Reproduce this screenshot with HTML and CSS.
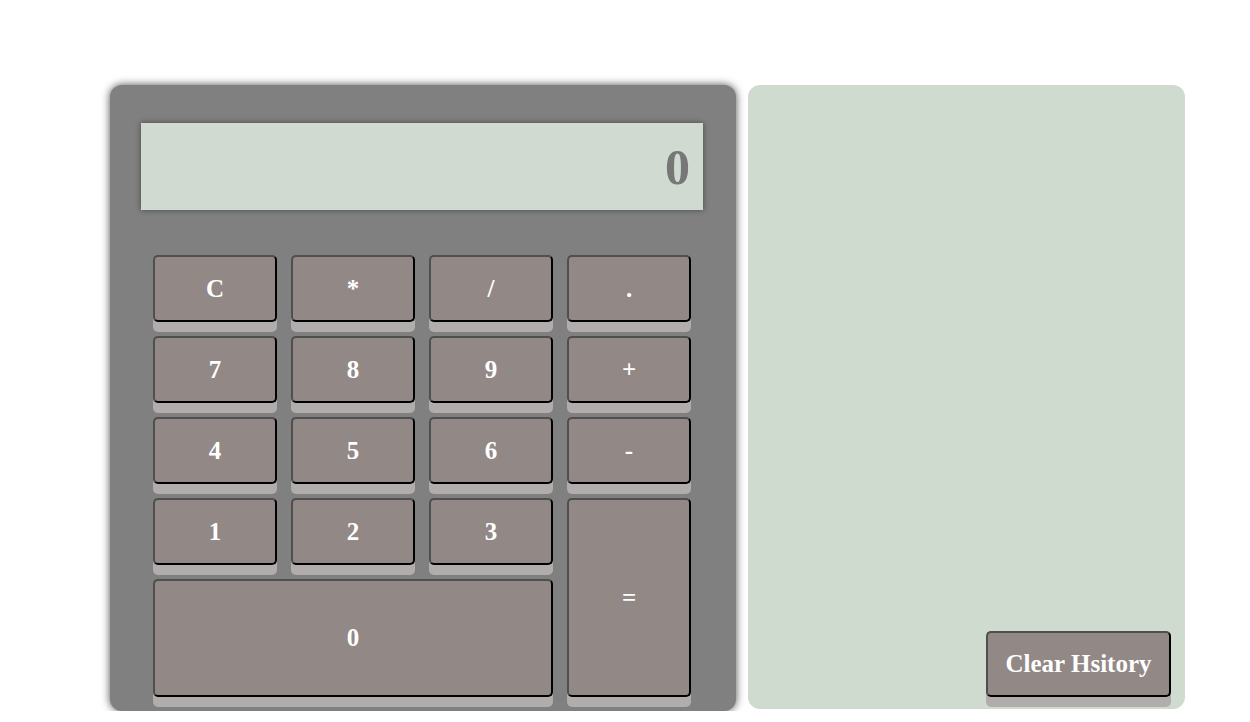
FILE: index.html
```html
<!DOCTYPE html>
<html>
<head>
<meta charset="utf-8">
<link rel="stylesheet" href="styles.css">
</head>
<body>
<div class="page">
  <div class="calculator">
    <div class="display">0</div>
    <div class="keys">
      <button class="key">C</button>
      <button class="key">*</button>
      <button class="key">/</button>
      <button class="key">.</button>
      <button class="key">7</button>
      <button class="key">8</button>
      <button class="key">9</button>
      <button class="key">+</button>
      <button class="key">4</button>
      <button class="key">5</button>
      <button class="key">6</button>
      <button class="key">-</button>
      <button class="key">1</button>
      <button class="key">2</button>
      <button class="key">3</button>
      <button class="key key-equals">=</button>
      <button class="key key-zero">0</button>
    </div>
  </div>
  <div class="history">
    <button class="key clear-btn">Clear Hsitory</button>
  </div>
</div>
</body>
</html>
```
FILE: styles.css
```css
html, body {
  margin: 0;
  padding: 0;
  background: #ffffff;
  font-family: "Liberation Serif", "Times New Roman", serif;
}

.page {
  display: flex;
  align-items: flex-start;
  gap: 12px;
  padding: 85px 0 0 110px;
}

.calculator {
  box-sizing: border-box;
  width: 626px;
  height: 626px;
  background: #808080;
  border-radius: 12px;
  box-shadow: 0 0 8px rgba(0, 0, 0, 0.7);
  padding: 38px 33px 0 31px;
}

.display {
  box-sizing: border-box;
  width: 562px;
  height: 87px;
  background: #d0dad0;
  box-shadow: 0 0 6px rgba(0, 0, 0, 0.45);
  color: #777777;
  font-weight: bold;
  font-size: 50px;
  text-align: right;
  padding: 18px 13px 0 0;
  line-height: 52px;
}

.keys {
  display: grid;
  grid-template-columns: repeat(4, 124px);
  grid-template-rows: repeat(4, 67px) 118px;
  column-gap: 14px;
  row-gap: 14px;
  margin: 45px 0 0 12px;
}

.key {
  box-sizing: border-box;
  margin: 0;
  padding: 0;
  background: #928886;
  color: #ffffff;
  font-family: "Liberation Serif", "Times New Roman", serif;
  font-weight: bold;
  font-size: 25px;
  border: 2px solid;
  border-color: #4f4f4f #000000 #000000 #4f4f4f;
  border-radius: 5px;
  box-shadow: 0 10px 0 #b1adac;
  cursor: pointer;
}

.key-equals {
  grid-column: 4;
  grid-row: 4 / span 2;
}

.key-zero {
  grid-column: 1 / span 3;
  grid-row: 5;
}

.history {
  box-sizing: border-box;
  width: 437px;
  height: 624px;
  background: #cfdbcf;
  border-radius: 12px;
  display: flex;
  justify-content: flex-end;
  align-items: flex-end;
  padding: 0 14px 12px 0;
}

.clear-btn {
  width: 185px;
  height: 66px;
  font-size: 25px;
}
```
